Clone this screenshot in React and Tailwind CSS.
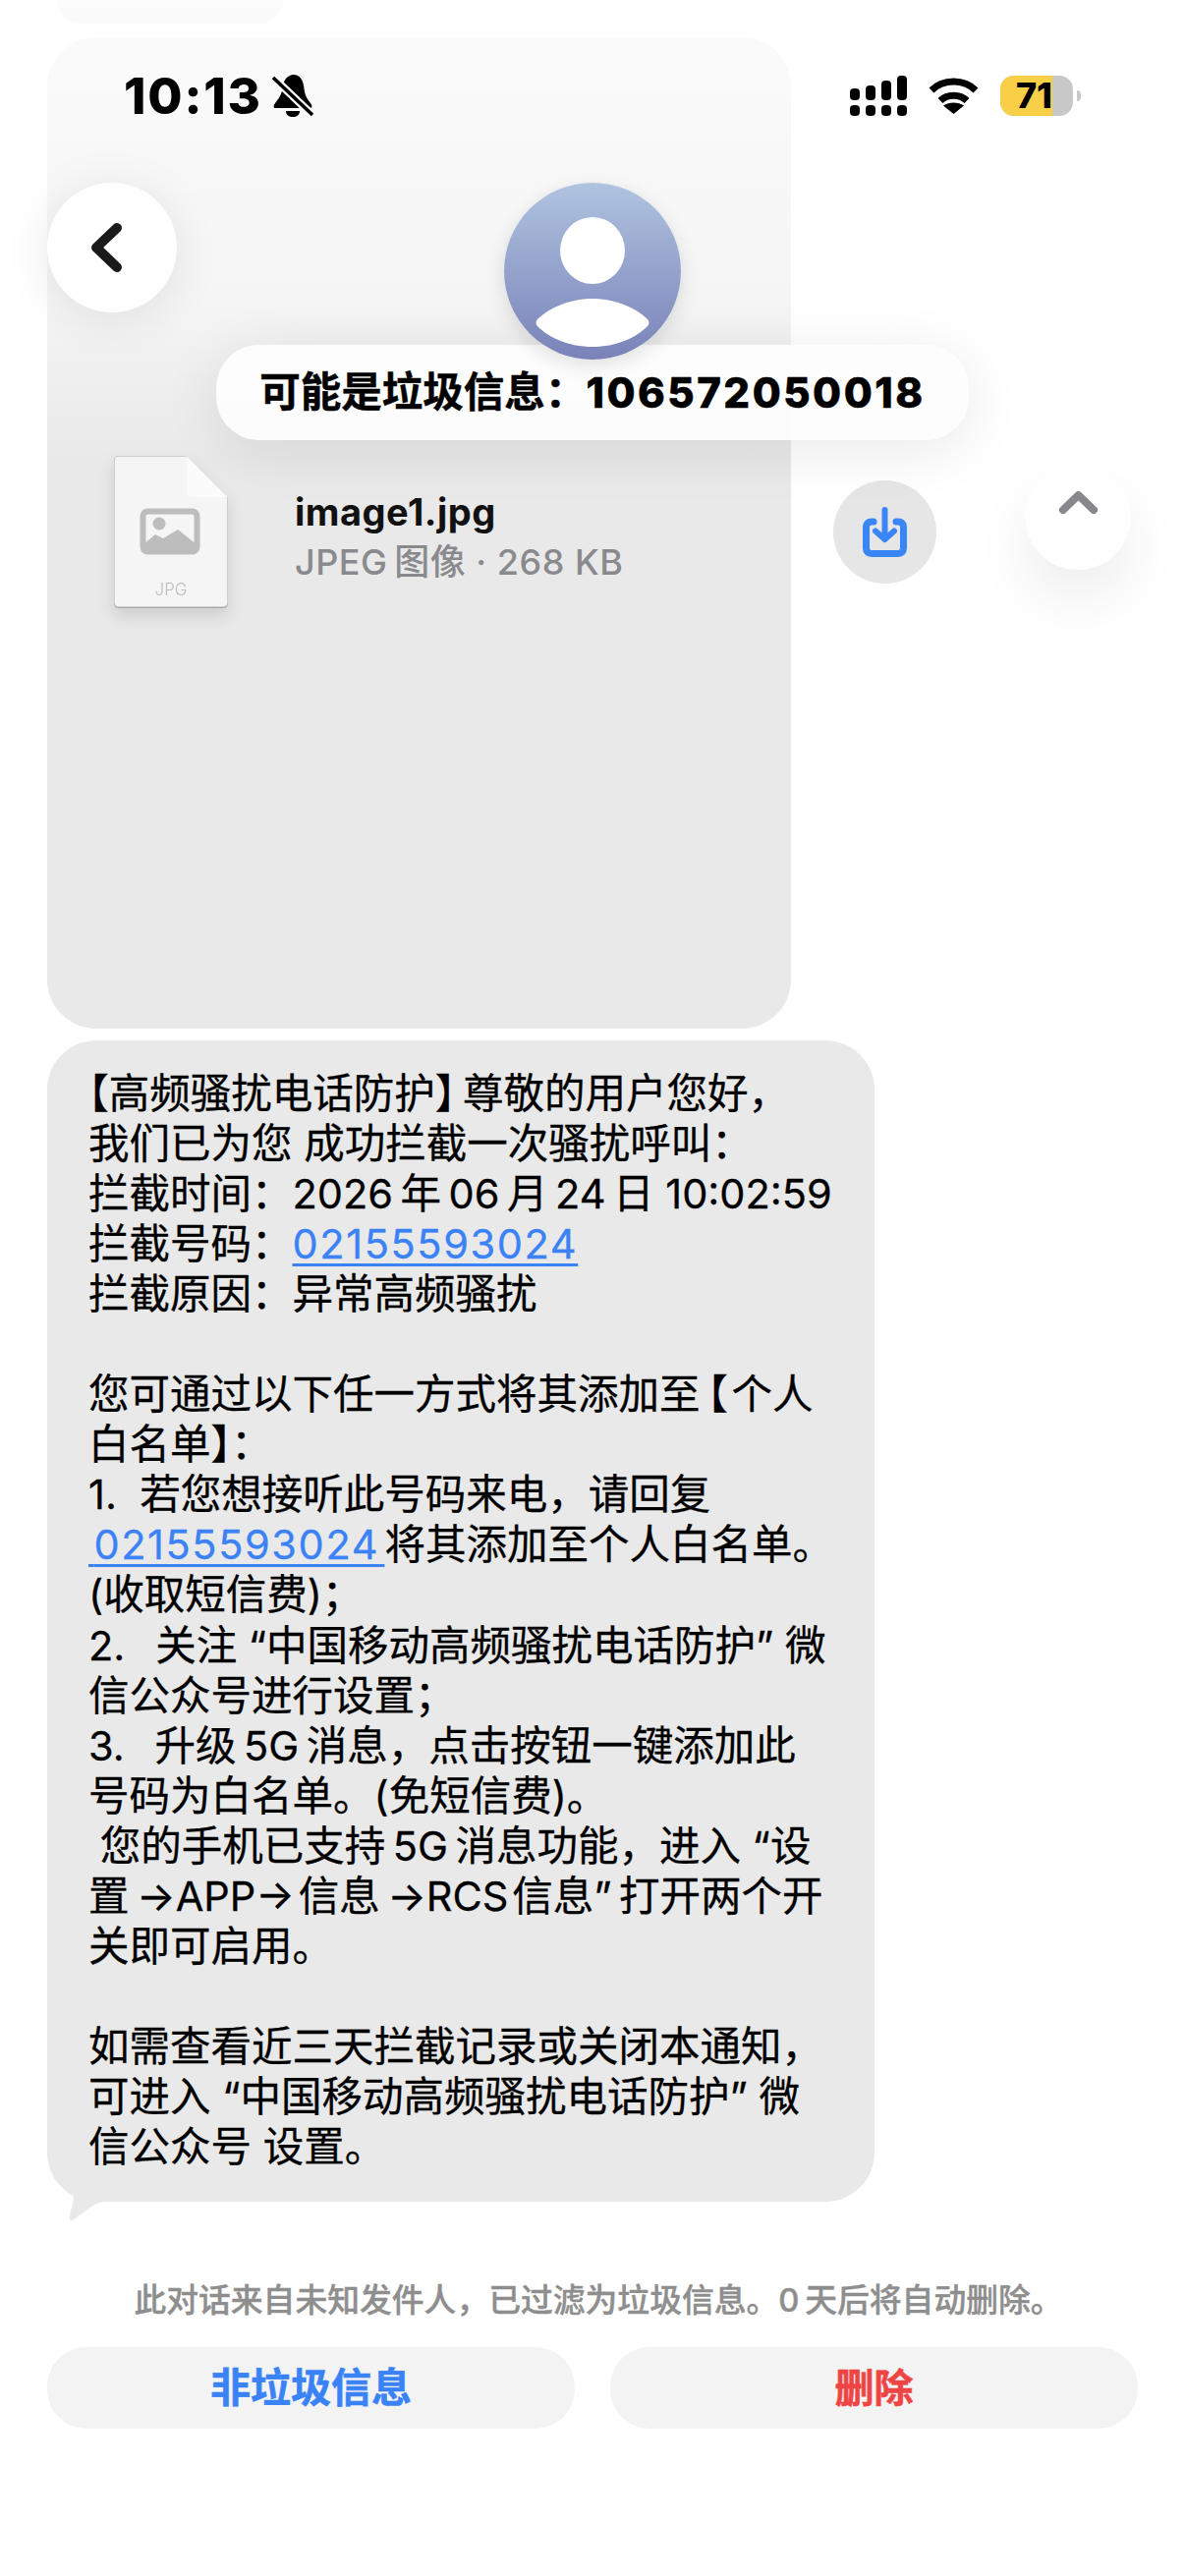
import React from 'react';

const thin = '\u2009';
const hair = '\u200A';
const colon = '\uFF1A';
const comma = '\uFF0C';
const semi = '\uFF1B';

const Half = ({ children }) => <span className="[font-feature-settings:'halt']">{children}</span>;

const Phone = ({ children }) => (
  <span className="text-[#3b82f6] underline decoration-[3px] underline-offset-[5px] tracking-[1.6px]">{children}</span>
);

const messageLines = [
  <><Half>【</Half>高频骚扰电话防护<Half>】</Half>{thin}尊敬的用户您好{comma}</>,
  `我们已为您 成功拦截一次骚扰呼叫${colon}`,
  `拦截时间${colon}2026${thin}年${thin}06${thin}月${thin}24${thin}日 10:02:59`,
  <>拦截号码{colon}<Phone>02155593024</Phone></>,
  `拦截原因${colon}异常高频骚扰`,
  ' ',
  <>您可通过以下任一方式将其添加至{thin}<Half>【</Half>{hair}个人</>,
  <>白名单<Half>】</Half>{colon}</>,
  `1.  若您想接听此号码来电${comma}请回复`,
  <><Phone>{hair}02155593024{hair}</Phone>将其添加至个人白名单。</>,
  `(收取短信费)${semi}`,
  `2.  ${thin}关注 “中国移动高频骚扰电话防护” 微`,
  `信公众号进行设置${semi}`,
  `3.  ${thin}升级${thin}5G${thin}消息${comma}点击按钮一键添加此`,
  '号码为白名单。(免短信费)。',
  ` 您的手机已支持${thin}5G${thin}消息功能${comma}进入 “设`,
  `置${thin}→APP→${hair}信息${thin}→RCS${hair}信息”${thin}打开两个开`,
  '关即可启用。',
  ' ',
  `如需查看近三天拦截记录或关闭本通知${comma}`,
  '可进入 “中国移动高频骚扰电话防护” 微',
  '信公众号 设置。',
];

const StatusBar = () => (
  <div className="absolute top-[70px] left-[126px] w-[974px] h-[54px] flex items-center justify-between text-black">
    <div className="flex items-center gap-[10px]">
      <span className="text-[51px] leading-none font-extrabold tracking-[1.8px]">10:13</span>
      <svg width="42" height="45" viewBox="0 0 42 45">
        <path d="M22 1C16 1 12 6 11 12C10 20 8 24 3 30C1 33 1 35 4 35H38C41 35 41 33 39 30C34 24 33 20 32 12C31 6 28 1 22 1Z" fill="#000" />
        <path d="M14 38H28C28 42 25 44 21 44C17 44 14 42 14 38Z" fill="#000" />
        <path d="M1 4L41 42" stroke="#fdfdfd" strokeWidth="8" />
        <path d="M1 4L41 42" stroke="#000" strokeWidth="3.5" />
      </svg>
    </div>
    <div className="flex items-center">
      <svg width="58" height="41" viewBox="0 0 58 41" fill="#000">
        <rect x="0" y="13" width="10" height="12" rx="4" />
        <rect x="16" y="10" width="10" height="15" rx="4" />
        <rect x="32" y="5" width="10" height="20" rx="4" />
        <rect x="48" y="0" width="10" height="25" rx="4" />
        <rect x="0" y="30" width="10" height="11" rx="4" />
        <rect x="16" y="30" width="10" height="11" rx="4" />
        <rect x="32" y="30" width="10" height="11" rx="4" />
        <rect x="48" y="30" width="10" height="11" rx="4" />
      </svg>
      <svg className="ml-[22px]" width="51" height="37" viewBox="0 0 51 37" fill="none">
        <path d="M3 13C15 1 36 1 48 13" stroke="#000" strokeWidth="7" />
        <path d="M12 23.5C19 16.5 32 16.5 39 23.5" stroke="#000" strokeWidth="7" />
        <path d="M25.5 37L15 28.5C21 24.5 30 24.5 36 28.5Z" fill="#000" />
      </svg>
      <div className="ml-[22px] w-[74px] h-[41px] rounded-[14px] overflow-hidden bg-[#c8c8c8] flex">
        <div className="w-[53px] bg-[#f9cf48] flex items-center justify-end">
          <span className="text-[36px] leading-none font-extrabold whitespace-nowrap">71</span>
        </div>
      </div>
      <div className="ml-[4px] w-[4px] h-[11px] rounded-r-full bg-[#c8c8c8]" />
    </div>
  </div>
);

const Header = () => (
  <>
    <div className="absolute top-0 left-0 w-full h-[470px] bg-linear-to-b from-white/85 via-white/55 via-65% to-white/0" />
    <StatusBar />
    <button className="absolute top-[186px] left-[48px] w-[132px] h-[132px] rounded-full bg-[#fefefe] shadow-[0_6px_50px_rgba(0,0,0,0.09)] flex items-center justify-center">
      <svg className="mr-[12px]" width="33" height="50" viewBox="0 0 33 50" fill="none">
        <path d="M27 5L6 25L27 45" stroke="#1a1a1a" strokeWidth="10" strokeLinecap="round" strokeLinejoin="round" />
      </svg>
    </button>
    <div className="absolute top-[351px] left-[220px] w-[766px] h-[97px] rounded-[44px] bg-[#fdfdfd]/95 shadow-[0_10px_60px_rgba(0,0,0,0.09)] flex items-center justify-center text-[41.5px] font-bold text-black whitespace-pre [-webkit-text-stroke-width:0.5px]">
      可能是垃圾信息{colon}<span className="text-[42px] font-extrabold tracking-[2.5px]">106572050018</span>
    </div>
    <div className="absolute top-[186px] left-[513px] w-[180px] h-[180px] rounded-full bg-linear-to-b from-[#b0c4e0] to-[#7a82b8] shadow-[0_6px_20px_rgba(0,0,0,0.12)]">
      <svg width="180" height="180" viewBox="0 0 180 180" fill="#fff">
        <ellipse cx="90" cy="69" rx="33" ry="34" />
        <path d="M90 118C114 118 135 128 146 139C148 141 148 144 146 146C134 158 114 167 90 167C66 167 46 158 34 146C32 144 32 141 34 139C45 128 66 118 90 118Z" />
      </svg>
    </div>
    <button className="absolute top-[472px] left-[1043px] w-[108px] h-[108px] rounded-full bg-[#fefefe] shadow-[0_30px_60px_rgba(0,0,0,0.07)] flex justify-center pt-[28px]">
      <svg width="39" height="23" viewBox="0 0 39 23" fill="none">
        <path d="M4 19L19.5 4L35 19" stroke="#87878c" strokeWidth="8" strokeLinecap="round" strokeLinejoin="round" />
      </svg>
    </button>
  </>
);

const FileIcon = () => (
  <div className="relative w-[116px] h-[155px] shrink-0 drop-shadow-[0_8px_8px_rgba(0,0,0,0.12)]">
    <svg width="116" height="155" viewBox="0 0 116 155">
      <path d="M5 0H74L116 42V150C116 153 114 155 111 155H5C2 155 0 153 0 150V5C0 2 2 0 5 0Z" fill="#a9a9a9" />
      <path d="M5 0.5H74L115.5 42V149C115.5 152 114 153.5 111 153.5H5C2 153.5 0.5 152 0.5 149V5C0.5 2 2 0.5 5 0.5Z" fill="#f5f5f5" />
      <path d="M74 0L116 42H80C76 42 74 40 74 36Z" fill="#fbfbfb" />
      <rect x="29.5" y="56.5" width="55" height="41" rx="5" fill="#f5f5f5" stroke="#bdbdbd" strokeWidth="6" />
      <circle cx="46" cy="69" r="6.5" fill="#bdbdbd" />
      <path d="M30 90L42 80L50 84L65 75L84 90V95H30Z" fill="#bdbdbd" />
    </svg>
    <span className="absolute left-0 right-0 top-[126px] text-center text-[17px] leading-[20px] text-[#bdbdbd] font-light">JPG</span>
  </div>
);

const DownloadButton = () => (
  <div className="mt-[451px] w-[105px] h-[105px] rounded-full bg-[#e6e6e6] flex items-center justify-center">
    <svg width="45" height="51" viewBox="0 0 45 51" fill="none">
      <path d="M11 15H9C5.5 15 3.5 17 3.5 20.5V42C3.5 45.5 5.5 47.5 9 47.5H36C39.5 47.5 41.5 45.5 41.5 42V20.5C41.5 17 39.5 15 36 15H34" stroke="#3b86f7" strokeWidth="7" strokeLinecap="round" />
      <path d="M22.5 3V31" stroke="#3b86f7" strokeWidth="6" strokeLinecap="round" />
      <path d="M13 24.5L22.5 33L32 24.5" stroke="#3b86f7" strokeWidth="6" strokeLinecap="round" strokeLinejoin="round" />
    </svg>
  </div>
);

export default function App() {
  return (
    <div className="relative w-[1206px] h-[2622px] overflow-hidden bg-white text-black font-['Inter','Noto_Sans_CJK_SC',sans-serif]">
      <div className="ml-[58px] w-[230px] h-[24px] rounded-b-[24px] bg-[#e9e9e9]" />

      <div className="mt-[14px] ml-[48px] flex items-start gap-[43px]">
        <div className="w-[757px] h-[1009px] rounded-[50px] bg-[#e9e9e9] pt-[426px] pl-[68px] flex items-start gap-[68px]">
          <FileIcon />
          <div className="mt-[32px]">
            <div className="text-[38px] leading-[50px] font-bold tracking-[0.5px] text-[#111]">image1.jpg</div>
            <div className="mt-[1px] text-[36px] leading-[50px] font-medium tracking-[0.5px] text-[#8a8a8e] whitespace-pre">JPEG{thin}图像 · 268 KB</div>
          </div>
        </div>
        <DownloadButton />
      </div>

      <div className="relative mt-[12px] ml-[48px] w-[842px] h-[1182px] rounded-[50px] bg-[#e9e9e9] pt-[29px] pl-[42px] text-[41.5px] leading-[51.05px] [-webkit-text-stroke-width:0.3px]">
        {messageLines.map((line, i) => (
          <div key={i} className="whitespace-pre">{line}</div>
        ))}
        <svg className="absolute left-[20px] bottom-[-20px]" width="40" height="44" viewBox="0 0 40 44" fill="#e9e9e9">
          <path d="M0 0C7 8 8 14 6 26C4 34 2 40 3 42C4 44 6 43 9 41C18 34 27 26 37 24L40 0Z" />
        </svg>
      </div>

      <div className="mt-[78px] pl-[12px] text-center text-[32.8px] leading-[44px] font-medium text-[#8e8e8e] whitespace-pre [-webkit-text-stroke-width:0.4px]">
        此对话来自未知发件人{comma}已过滤为垃圾信息。0{thin}天后将自动删除。
      </div>

      <div className="mt-[26px] mx-[48px] flex gap-[36px] [-webkit-text-stroke-width:0.6px]">
        <button className="flex-1 h-[83px] rounded-[40px] bg-[#f3f3f3] text-[41px] font-bold text-[#3a83f7]">非垃圾信息</button>
        <button className="flex-1 h-[83px] rounded-[40px] bg-[#f3f3f3] text-[40px] font-bold text-[#ee4444]">删除</button>
      </div>

      <Header />
    </div>
  );
}
